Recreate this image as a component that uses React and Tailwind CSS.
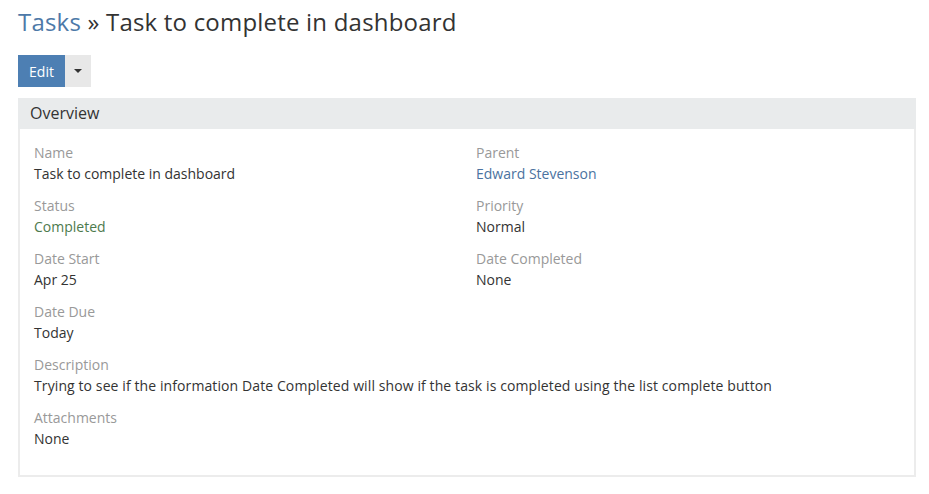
import React from 'react';

const Field = ({ label, children, valueClass = 'text-[#333]' }) => (
  <div className="mb-[12px]">
    <div className="text-[14px] leading-[20px] text-[#999]">{label}</div>
    <div className={`text-[14px] leading-[21px] ${valueClass}`}>{children}</div>
  </div>
);

export default function App() {
  return (
    <div className="min-h-screen bg-white px-[18px] pt-[5px] font-['Open_Sans',sans-serif] text-[#333]">
      {/* Header */}
      <h1 className="text-[24px] leading-[33px] font-normal tracking-[0.2px]">
        <a href="#" className="text-[#4d79a8]">Tasks</a>
        <span className="text-[#333]"> » Task to complete in dashboard</span>
      </h1>

      {/* Actions */}
      <div className="mt-[17px] flex h-[32px]">
        <button className="w-[47px] bg-[#4d7fb3] text-[14px] text-white">Edit</button>
        <button className="flex w-[26px] items-center justify-center bg-[#e8e8e8]">
          <span className="block h-0 w-0 border-x-[4px] border-t-[4px] border-x-transparent border-t-[#333]" />
        </button>
      </div>

      {/* Overview panel */}
      <div className="mt-[11px] w-[898px] border-2 border-t-0 border-[#ececec]">
        <div className="-mx-[2px] bg-[#e9ebec] px-[12px] text-[16px] leading-[31px] text-[#333]">
          Overview
        </div>
        <div className="px-[14px] pt-[14px] pb-[14px]">
          <div className="grid grid-cols-[442px_1fr]">
            <div>
              <Field label="Name">Task to complete in dashboard</Field>
              <Field label="Status" valueClass="text-[#4d7a4d]">Completed</Field>
              <Field label="Date Start">Apr 25</Field>
              <Field label="Date Due">Today</Field>
            </div>
            <div>
              <Field label="Parent" valueClass="text-[#4b72a0]">
                <a href="#">Edward Stevenson</a>
              </Field>
              <Field label="Priority">Normal</Field>
              <Field label="Date Completed">None</Field>
            </div>
          </div>
          <Field label="Description">
            <span className="tracking-[0.1px]">
              Trying to see if the information Date Completed will show if the task is completed using the list complete button
            </span>
          </Field>
          <Field label="Attachments">None</Field>
        </div>
      </div>
    </div>
  );
}
